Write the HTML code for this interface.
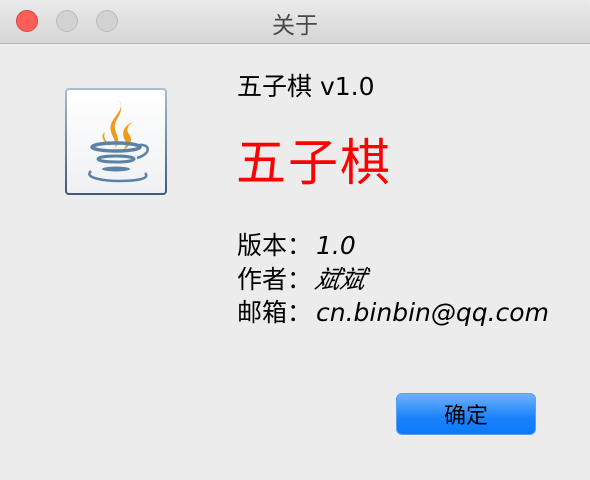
<!DOCTYPE html>
<html><head><meta charset="utf-8"><style>
body{margin:0;width:590px;height:480px;background:#ececec;font-family:"DejaVu Sans","Noto Sans CJK SC",sans-serif;position:relative;overflow:hidden}
.tb{position:absolute;left:0;top:0;width:590px;height:43px;background:linear-gradient(#ebebeb,#d5d5d5);border-bottom:1px solid #b5b5b5;border-radius:6px 6px 0 0}
.dot{position:absolute;top:10px;width:22px;height:22px;border-radius:50%;box-sizing:border-box}
.t{position:absolute;top:6px;left:0;width:590px;text-align:center;font-size:23px;color:#4a4a4a;font-family:"Noto Sans CJK SC",sans-serif}
.txt{position:absolute;color:#000;white-space:nowrap;line-height:30px}
.btn{position:absolute;left:396px;top:393px;width:140px;height:42px;box-sizing:border-box;border:1px solid #5a9ff0;border-radius:6px;background:linear-gradient(#6fb1fb,#1a82fb 60%,#0a7afb);text-align:center;line-height:40px;font-size:22px;font-family:"Noto Sans CJK SC",sans-serif}
.c{font-family:"Noto Sans CJK SC",sans-serif;display:inline-block;width:25px}
</style></head><body>
<div class="tb">
<div class="dot" style="left:16px;background:#fd5f57;border:1px solid #e0443e"></div>
<div class="dot" style="left:56px;background:#d2d2d2;border:1px solid #bcbcbc"></div>
<div class="dot" style="left:96px;background:#d2d2d2;border:1px solid #bcbcbc"></div>
<div class="t">关于</div>
</div>
<svg style="position:absolute;left:65px;top:88px" width="102" height="107" viewBox="0 0 102 107">
<defs><linearGradient id="g" x1="0" y1="0" x2="0" y2="1"><stop offset="0" stop-color="#a8bdd3"/><stop offset="1" stop-color="#3e5a78"/></linearGradient>
<linearGradient id="f" x1="0" y1="0" x2="0" y2="1"><stop offset="0" stop-color="#fff"/><stop offset="1" stop-color="#eef0f3"/></linearGradient></defs>
<rect x="1" y="1" width="100" height="105" rx="3" fill="url(#f)" stroke="url(#g)" stroke-width="2"/>
<path d="M54 12 C62 24 42 30 46 44 C48 50 52 54 50 60 C58 52 48 44 50 36 C52 28 60 24 54 12Z" fill="#f09a1a"/>
<path d="M68 34 C58 38 56 46 60 52 C62 56 60 60 58 62 C66 58 68 52 64 46 C61 42 62 38 68 34Z" fill="#f09a1a"/>
<path d="M40 44 C34 48 40 56 46 58 C40 54 38 48 40 44Z" fill="#f09a1a"/>
<ellipse cx="51" cy="59" rx="24" ry="4" fill="none" stroke="#5b82a5" stroke-width="3.5"/>
<path d="M74 57 C86 56 86 66 72 70" fill="none" stroke="#5b82a5" stroke-width="2.5"/>
<ellipse cx="51" cy="71" rx="18" ry="3" fill="none" stroke="#5b82a5" stroke-width="3"/>
<ellipse cx="51" cy="81" rx="14" ry="2.5" fill="#5b82a5"/>
<path d="M26 83 C18 90 40 93 54 93 C70 93 86 91 80 85" fill="none" stroke="#5b82a5" stroke-width="2.5"/>
</svg>
<div class="txt" style="left:237px;top:70px;font-size:25px"><span style="font-family:'Noto Sans CJK SC'">五子棋</span> v1.0</div>
<div class="txt" style="left:236px;top:123px;font-size:50px;line-height:normal;color:#ff0000;letter-spacing:2px;font-family:'Noto Sans CJK SC',sans-serif">五子棋</div>
<div class="txt" style="left:237px;top:229px;font-size:25px"><span class="c">版</span><span class="c">本</span><span class="c" style="width:29px">：</span><i>1.0</i></div>
<div class="txt" style="left:237px;top:263px;font-size:25px"><span class="c">作</span><span class="c">者</span><span class="c" style="width:29px">：</span><i style="font-family:'Noto Sans CJK SC';display:inline-block;transform:skewX(-12deg)">斌斌</i></div>
<div class="txt" style="left:237px;top:296px;font-size:25px"><span class="c">邮</span><span class="c">箱</span><span class="c" style="width:29px">：</span><i>cn.binbin@qq.com</i></div>
<div class="btn">确定</div>
</body></html>
